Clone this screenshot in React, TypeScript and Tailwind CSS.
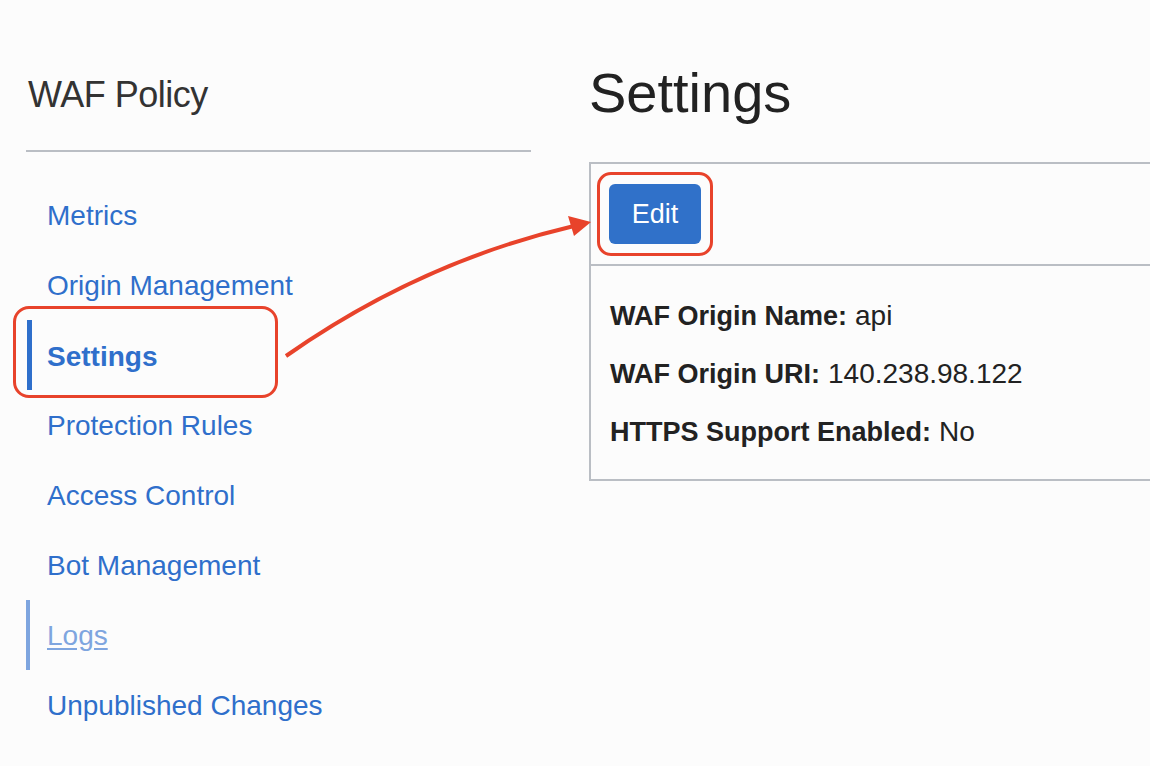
import React from "react"

const navItems = [
  { label: "Metrics" },
  { label: "Origin Management" },
  { label: "Settings", active: true },
  { label: "Protection Rules" },
  { label: "Access Control" },
  { label: "Bot Management" },
  { label: "Logs", visited: true },
  { label: "Unpublished Changes" },
]

const fields = [
  { name: "WAF Origin Name:", value: "api" },
  { name: "WAF Origin URI:", value: "140.238.98.122" },
  { name: "HTTPS Support Enabled:", value: "No" },
]

export default function App() {
  return (
    <div
      className="relative h-[766px] w-[1150px] overflow-hidden bg-[#fcfcfc] text-[#222]"
      style={{ fontFamily: '"Liberation Sans", Arial, sans-serif' }}
    >
      <div className="flex gap-[58px] pt-[73px]">
        <aside className="ml-[26px] w-[505px] shrink-0">
          <h2 className="ml-[2px] h-[44px] text-[36px] font-light leading-[44px] tracking-[-0.5px] text-[#333]">
            WAF Policy
          </h2>
          <div className="mt-[33px] h-[2px] bg-[#babec4]" />
          <nav className="mt-[28px] flex flex-col">
            {navItems.map((item) => (
              <div key={item.label} className="relative flex h-[70px] items-center pl-[21px] pt-[1px]">
                {item.active && (
                  <>
                    <span className="absolute left-[1px] top-0 bottom-0 w-[5px] bg-[#2f6fcb]" />
                    <span className="absolute -left-[13px] -top-[14px] h-[92px] w-[265px] rounded-[16px] border-[3px] border-[#e8432b]" />
                  </>
                )}
                {item.visited && (
                  <span className="absolute left-0 top-0 bottom-0 w-[4px] bg-[#7ea5df]" />
                )}
                <a
                  className={
                    item.active
                      ? "pt-[2px] text-[28px] font-bold text-[#2f6fcb]"
                      : item.visited
                        ? "text-[28px] text-[#7ea5df] underline underline-offset-[3px]"
                        : "text-[28px] text-[#2f6fcb]"
                  }
                >
                  {item.label}
                </a>
              </div>
            ))}
          </nav>
        </aside>

        <main className="min-w-0 flex-1">
          <h1 className="-mt-[12px] h-[64px] text-[56px] leading-[64px] text-[#222]">Settings</h1>
          <div className="mt-[37px] mr-[-20px] border-2 border-[#babec4]">
            <div className="flex h-[102px] items-center border-b-2 border-[#babec4] pl-[6px]">
              <div className="rounded-[14px] border-[3px] border-[#e8432b] p-[9px]">
                <button className="flex h-[60px] w-[92px] items-center justify-center rounded-[6px] bg-[#3071c9] text-[27px] text-white">
                  Edit
                </button>
              </div>
            </div>
            <div className="flex flex-col px-[19px] pt-[21px] pb-[18px]">
              {fields.map((f) => (
                <div key={f.name} className="flex h-[58px] items-center">
                  <span className="text-[27px] font-bold text-[#222]">{f.name}</span>
                  <span className="ml-[8px] text-[28px] text-[#222]">{f.value}</span>
                </div>
              ))}
            </div>
          </div>
        </main>
      </div>

      <svg className="pointer-events-none absolute left-0 top-0" width="1150" height="766">
        <path d="M286 356 Q 420 262 574 226" fill="none" stroke="#e8432b" strokeWidth="4" />
        <polygon points="591,222 568,216 574,236" fill="#e8432b" />
      </svg>
    </div>
  )
}
